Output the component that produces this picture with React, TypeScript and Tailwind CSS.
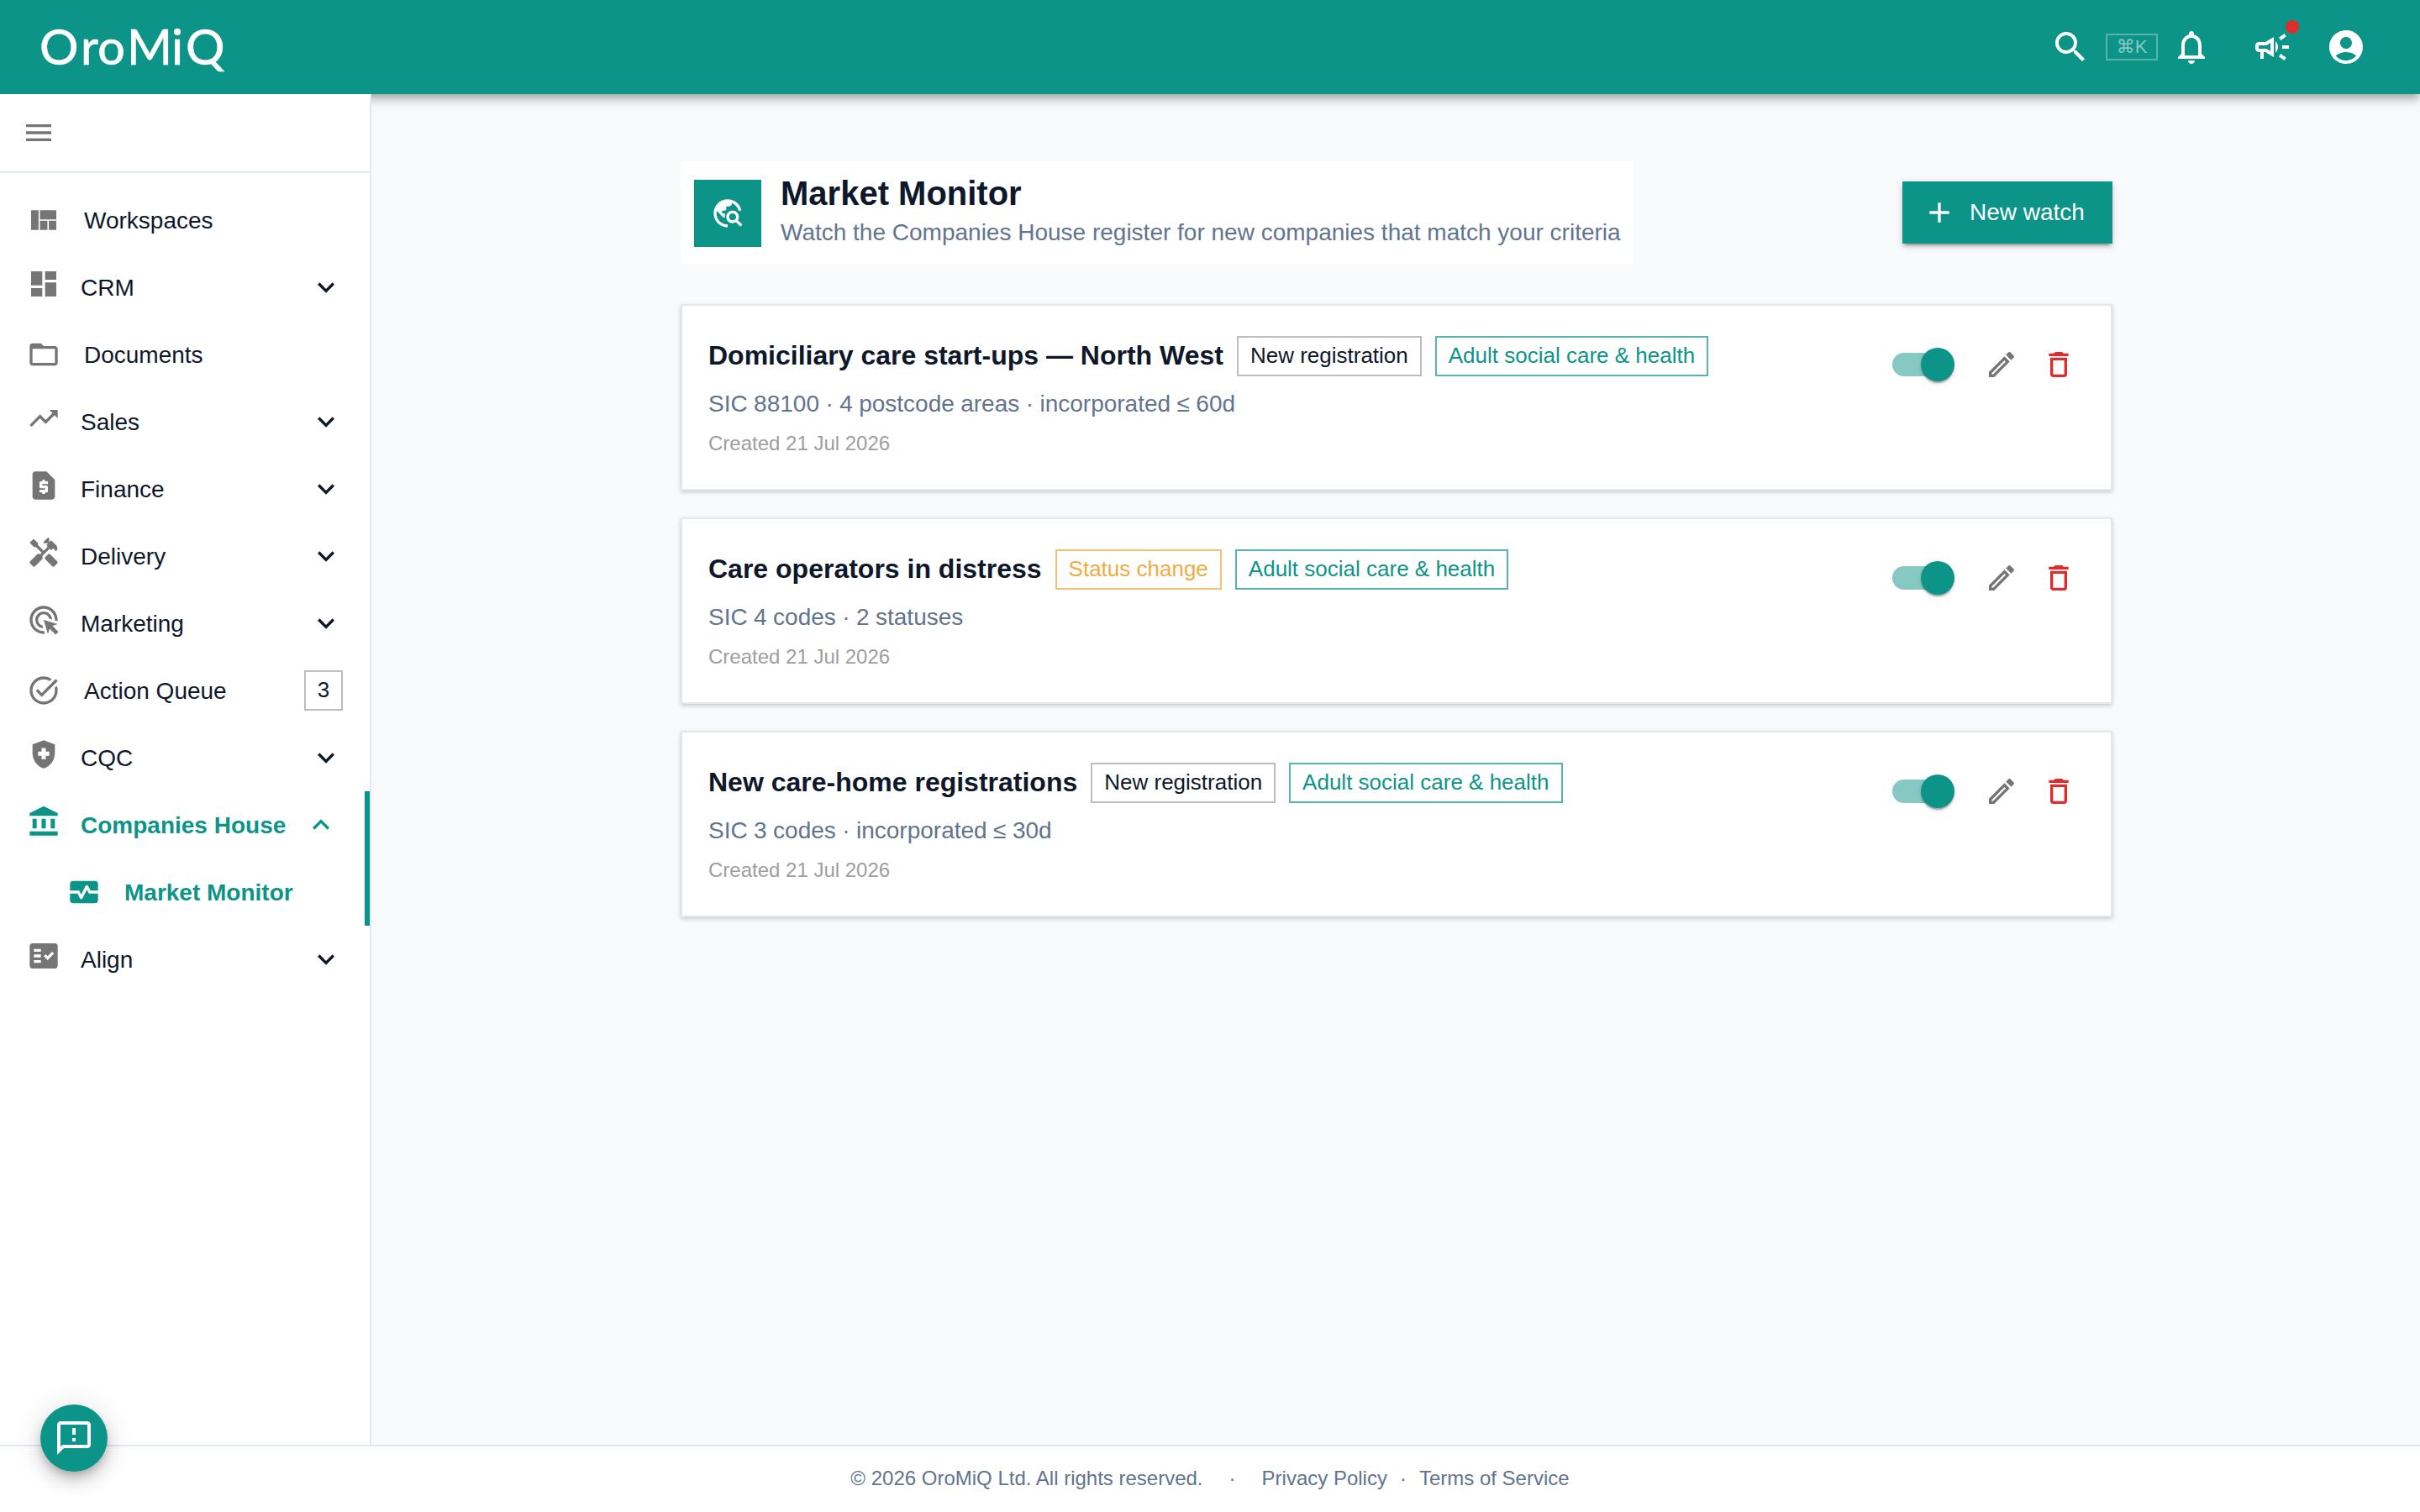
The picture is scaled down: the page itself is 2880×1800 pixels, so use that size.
import React from 'react';
import { clsx } from 'clsx';
import type { IconType } from 'react-icons';
import {
  MdAccountCircle,
  MdAdd,
  MdAdsClick,
  MdDashboard,
  MdDeleteOutline,
  MdExpandLess,
  MdExpandMore,
  MdFactCheck,
  MdFolderOpen,
  MdHandyman,
  MdHealthAndSafety,
  MdMenu,
  MdMonitorHeart,
  MdNotificationsNone,
  MdOutlineCampaign,
  MdOutlineEdit,
  MdOutlineFeedback,
  MdRequestPage,
  MdSearch,
  MdTaskAlt,
  MdTravelExplore,
  MdTrendingUp,
  MdViewQuilt,
} from 'react-icons/md';

type IconProps = { className?: string };

const BankIcon: React.FC<IconProps> = ({ className }) => (
  <svg viewBox="0 0 24 24" fill="currentColor" className={className}>
    <path d="M4 10h3v7H4zm6.5 0h3v7h-3zM2 19h20v3H2zm15-9h3v7h-3zm-5-9L2 6v2h20V6z" />
  </svg>
);

type NavItem = {
  label: string;
  icon: IconType | React.FC<IconProps>;
  expandable?: boolean;
  open?: boolean;
  child?: boolean;
  badge?: number;
};

const navItems: NavItem[] = [
  { label: 'Workspaces', icon: MdViewQuilt },
  { label: 'CRM', icon: MdDashboard, expandable: true },
  { label: 'Documents', icon: MdFolderOpen },
  { label: 'Sales', icon: MdTrendingUp, expandable: true },
  { label: 'Finance', icon: MdRequestPage, expandable: true },
  { label: 'Delivery', icon: MdHandyman, expandable: true },
  { label: 'Marketing', icon: MdAdsClick, expandable: true },
  { label: 'Action Queue', icon: MdTaskAlt, badge: 3 },
  { label: 'CQC', icon: MdHealthAndSafety, expandable: true },
  { label: 'Companies House', icon: BankIcon, expandable: true, open: true },
  { label: 'Market Monitor', icon: MdMonitorHeart, child: true },
  { label: 'Align', icon: MdFactCheck, expandable: true },
];

type Tone = 'default' | 'primary' | 'warning';

type Watch = {
  name: string;
  chips: { label: string; tone: Tone }[];
  summary: string;
  created: string;
};

const watches: Watch[] = [
  {
    name: 'Domiciliary care start-ups — North West',
    chips: [
      { label: 'New registration', tone: 'default' },
      { label: 'Adult social care & health', tone: 'primary' },
    ],
    summary: 'SIC 88100 · 4 postcode areas · incorporated ≤ 60d',
    created: 'Created 21 Jul 2026',
  },
  {
    name: 'Care operators in distress',
    chips: [
      { label: 'Status change', tone: 'warning' },
      { label: 'Adult social care & health', tone: 'primary' },
    ],
    summary: 'SIC 4 codes · 2 statuses',
    created: 'Created 21 Jul 2026',
  },
  {
    name: 'New care-home registrations',
    chips: [
      { label: 'New registration', tone: 'default' },
      { label: 'Adult social care & health', tone: 'primary' },
    ],
    summary: 'SIC 3 codes · incorporated ≤ 30d',
    created: 'Created 21 Jul 2026',
  },
];

const chipTones: Record<Tone, string> = {
  default: 'border-[#bdbdbd] text-slate-900',
  primary: 'border-[#56b4ac] text-[#0d9488]',
  warning: 'border-[#f3c173] text-[#eeac42]',
};

const Header = () => (
  <header className="z-10 flex h-[112px] shrink-0 items-center justify-between bg-[#0d9488] pl-12 pr-16 text-white shadow-[0_4px_8px_-2px_rgba(0,0,0,0.2),0_8px_10px_0_rgba(0,0,0,0.14),0_2px_20px_0_rgba(0,0,0,0.12)]">
    <svg width="222" height="64" viewBox="0 0 222 64" className="overflow-visible" fill="currentColor">
      <text
        y="52.5"
        x="-1 48 68 103 156 173"
        className="font-['Lato',sans-serif] text-[58px] font-medium"
        stroke="currentColor"
        strokeWidth="0.3"
      >
        OroMiQ
      </text>
    </svg>
    <div className="flex items-center">
      <MdSearch className="size-12" />
      <kbd className="ml-[18px] flex h-8 w-[62px] items-center justify-center border-2 border-white/30 font-['Liberation_Sans','DejaVu_Sans',sans-serif] text-[22px] leading-none text-white/50">
        ⌘K
      </kbd>
      <MdNotificationsNone className="ml-4 size-12" />
      <div className="relative ml-12">
        <MdOutlineCampaign className="size-12" />
        <span className="absolute -right-2 -top-2 size-4 rounded-full bg-[#dc2c2c]" />
      </div>
      <MdAccountCircle className="ml-10 size-12" />
    </div>
  </header>
);

const NavRow = ({ item }: { item: NavItem }) => {
  const active = item.open || item.child;
  const Icon = item.icon;

  return (
    <li
      className={clsx(
        'flex h-20 items-center pr-8',
        item.child ? 'pl-20' : 'pl-8',
        active ? 'border-r-[6px] border-[#0d9488] font-bold text-[#0d9488]' : 'text-slate-900'
      )}
    >
      <Icon
        className={clsx(
          'size-10 shrink-0',
          item.expandable ? 'mb-2 mr-6' : 'mr-7',
          !active && 'text-[#757575]'
        )}
      />
      <span className="flex-1 whitespace-nowrap pt-0.5">{item.label}</span>
      {item.badge && (
        <span className="flex h-12 w-[46px] items-center justify-center border-2 border-[#bdbdbd] pb-0.5 text-[26px]">
          {item.badge}
        </span>
      )}
      {item.expandable &&
        (item.open ? <MdExpandLess className="size-10 shrink-0" /> : <MdExpandMore className="size-10 shrink-0" />)}
    </li>
  );
};

const Sidebar = () => (
  <nav className="z-20 w-[442px] shrink-0 border-r-2 border-slate-200 bg-white">
    <div className="flex h-[94px] items-center border-b-2 border-slate-200 pl-[26px]">
      <MdMenu className="size-10 text-[#757575]" />
    </div>
    <ul className="pt-4 text-[28px] leading-10">
      {navItems.map((item) => (
        <NavRow key={item.label} item={item} />
      ))}
    </ul>
  </nav>
);

const Toggle = () => (
  <div className="flex items-center">
    <span className="h-7 w-[68px] rounded-full bg-[#86c9c3]" />
    <span className="-ml-[34px] size-10 rounded-full bg-[#0d9488] shadow-[0_4px_2px_-2px_rgba(0,0,0,0.2),0_2px_2px_0_rgba(0,0,0,0.14),0_2px_6px_0_rgba(0,0,0,0.12)]" />
  </div>
);

const WatchCard = ({ watch }: { watch: Watch }) => (
  <article className="flex h-[222px] items-start justify-between border-2 border-slate-200 bg-white pl-[31px] pr-[42px] pt-9 shadow-[0_2px_6px_0_rgba(0,0,0,0.1),0_2px_4px_0_rgba(0,0,0,0.1)]">
    <div>
      <div className="flex h-12 items-center gap-4">
        <h2 className="pb-0.5 text-[32px] font-bold leading-10 text-slate-900">{watch.name}</h2>
        {watch.chips.map((chip) => (
          <span
            key={chip.label}
            className={clsx('flex h-12 items-center border-2 px-3.5 pb-0.5 text-[26px]', chipTones[chip.tone])}
          >
            {chip.label}
          </span>
        ))}
      </div>
      <p className="mt-[13px] text-[28px] leading-10 text-slate-500 [word-spacing:-0.35px]">{watch.summary}</p>
      <p className="mt-[7px] text-[24px] leading-10 text-[#9e9e9e]">{watch.created}</p>
    </div>
    <div className="flex items-center pt-3.5">
      <Toggle />
      <MdOutlineEdit className="ml-9 size-10 text-[#757575]" />
      <MdDeleteOutline className="ml-7 size-10 text-[#dc2c2c]" />
    </div>
  </article>
);

const Footer = () => (
  <footer className="flex h-20 shrink-0 items-center justify-center border-t-2 border-slate-200 bg-white pb-0.5 text-[24px] text-slate-500">
    <span>© 2026 OroMiQ Ltd. All rights reserved.</span>
    <span className="mx-[31px]">·</span>
    <a>Privacy Policy</a>
    <span className="mx-[15px]">·</span>
    <a>Terms of Service</a>
  </footer>
);

const App = () => (
  <div className="relative flex h-[1800px] w-[2880px] flex-col overflow-hidden bg-slate-50 font-['Liberation_Sans',Arial,sans-serif]">
    <Header />
    <div className="flex min-h-0 flex-1">
      <Sidebar />
      <main className="flex-1 pl-[368px] pt-20">
        <div className="w-[1704px]">
          <div className="flex h-[122px] items-center justify-between">
            <div className="flex h-full w-[1134px] items-start bg-white px-4">
              <div className="mt-[22px] flex size-20 shrink-0 items-center justify-center bg-[#0d9488] text-white">
                <MdTravelExplore className="size-10" />
              </div>
              <div className="ml-[23px] whitespace-nowrap">
                <h1 className="mt-[14px] text-[40px] font-bold leading-[48px] text-slate-900">Market Monitor</h1>
                <p className="mt-[3px] text-[28px] leading-10 text-slate-500">
                  Watch the Companies House register for new companies that match your criteria
                </p>
              </div>
            </div>
            <button className="flex h-[74px] w-[250px] items-center bg-[#0d9488] pl-6 text-[28px] text-white shadow-[0_6px_2px_-4px_rgba(0,0,0,0.2),0_4px_4px_0_rgba(0,0,0,0.14),0_2px_10px_0_rgba(0,0,0,0.12)]">
              <MdAdd className="mr-4 size-10" />
              New watch
            </button>
          </div>
          <div className="mt-12 flex flex-col gap-8">
            {watches.map((watch) => (
              <WatchCard key={watch.name} watch={watch} />
            ))}
          </div>
        </div>
      </main>
    </div>
    <Footer />
    <button className="absolute bottom-12 left-12 z-30 flex size-20 items-center justify-center rounded-full bg-[#0d9488] text-white shadow-[0_6px_10px_-2px_rgba(0,0,0,0.2),0_12px_20px_0_rgba(0,0,0,0.14),0_2px_36px_0_rgba(0,0,0,0.12)]">
      <MdOutlineFeedback className="size-12" />
    </button>
  </div>
);

export default App;
